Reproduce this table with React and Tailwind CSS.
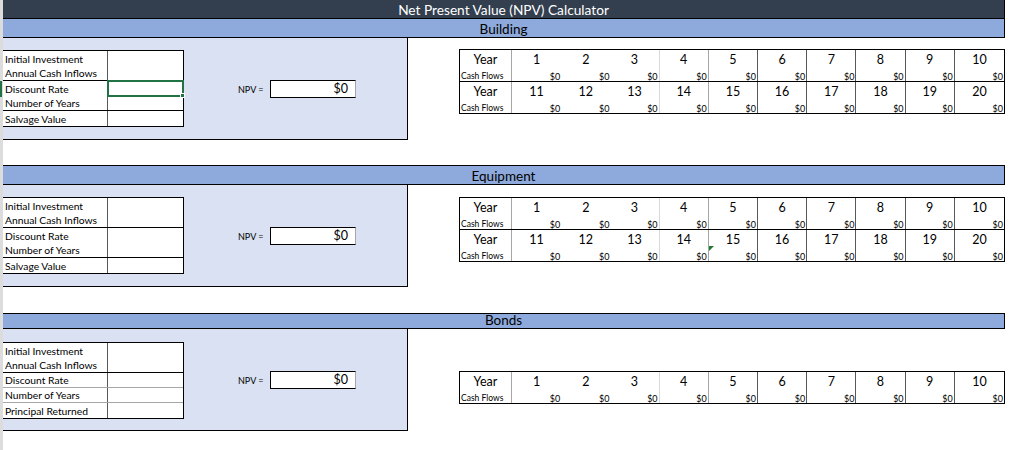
import React from "react";

const colBorders = [
  "",
  "",
  "border-r border-[#d9d9d9]",
  "border-r border-[#a6a6a6]",
  "border-r border-[#595959]",
  "border-r border-[#595959]",
  "border-r border-[#595959]",
  "border-r border-[#595959]",
  "border-r border-[#595959]",
  "",
];

function YearPair({ start, last, triangle }) {
  const nums = Array.from({ length: 10 }, (_, i) => start + i);
  return (
    <div className={"grid grid-cols-[52px_repeat(10,minmax(0,1fr))] " + (last ? "" : "border-b border-black")}>
      <div className="h-[16px] border-r border-[#a6a6a6] flex items-end justify-center text-[12.5px] leading-none">Year</div>
      {nums.map((n, i) => (
        <div key={"y" + n} className={"h-[16px] flex items-end justify-center text-[12.5px] leading-none " + colBorders[i]}>
          {n}
        </div>
      ))}
      <div className="h-[15px] border-r border-[#a6a6a6] flex items-end pl-[1px] pb-[1px] text-[8.5px] leading-none">Cash Flows</div>
      {nums.map((n, i) => (
        <div key={"c" + n} className={"relative h-[15px] flex items-end justify-end pr-[1px] text-[9px] leading-none " + colBorders[i]}>
          {triangle && i === 4 ? (
            <span className="absolute left-0 top-0 w-0 h-0 border-t-[5px] border-t-[#1e7b34] border-r-[5px] border-r-transparent"></span>
          ) : null}
          $0
        </div>
      ))}
    </div>
  );
}

function YearTable({ pairs, triangle }) {
  return (
    <div className="w-[546px] border border-black bg-white">
      {pairs.map((s, idx) => (
        <YearPair key={s} start={s} last={idx === pairs.length - 1} triangle={triangle && idx === 1} />
      ))}
    </div>
  );
}

function LeftTable({ rows, selected }) {
  return (
    <div className="w-[181px] border-t border-b border-r border-black bg-white">
      {rows.map((r, i) => (
        <div
          key={r.label}
          className={
            "flex h-[15px] " +
            (r.line === "black" ? "border-b border-black" : r.line === "gray" ? "border-b border-[#a6a6a6]" : "")
          }
        >
          <div className="w-[105px] border-r border-[#595959] flex items-end pb-[2px] pl-[2px] text-[10.3px] leading-none whitespace-nowrap">
            {r.label}
          </div>
          <div className="relative flex-1">
            {selected === i ? (
              <div className="absolute -left-[1px] -top-[1px] -right-[1px] -bottom-[1px] border-2 border-[#217346]">
                <span className="absolute -right-[3px] -bottom-[3px] w-[5px] h-[5px] bg-[#217346] border border-white"></span>
              </div>
            ) : null}
          </div>
        </div>
      ))}
    </div>
  );
}

function Npv() {
  return (
    <div className="flex items-center">
      <span className="w-[32px] text-[9px] leading-none">NPV =</span>
      <div className="w-[86px] h-[18px] bg-white border border-black border-r-[#a6a6a6] flex items-center justify-end pr-[7px] text-[12.5px] leading-none">
        $0
      </div>
    </div>
  );
}

function Panel({ rows, selected, leftPt, npvMt, yearPt, pairs, triangle }) {
  return (
    <div className="flex h-[102px]">
      <div className={"w-[405px] h-full shrink-0 bg-[#d9e1f2] border-r border-b border-black flex items-start " + leftPt}>
        <LeftTable rows={rows} selected={selected} />
        <div className={"ml-[54px] " + npvMt}>
          <Npv />
        </div>
      </div>
      <div className={"flex-1 pl-[51px] " + yearPt}>
        <YearTable pairs={pairs} triangle={triangle} />
      </div>
    </div>
  );
}

const baseRows = [
  { label: "Initial Investment", line: null },
  { label: "Annual Cash Inflows", line: "black" },
  { label: "Discount Rate", line: null },
  { label: "Number of Years", line: "black" },
  { label: "Salvage Value", line: null },
];

const bondRows = [
  { label: "Initial Investment", line: null },
  { label: "Annual Cash Inflows", line: "black" },
  { label: "Discount Rate", line: "gray" },
  { label: "Number of Years", line: "gray" },
  { label: "Principal Returned", line: null },
];

export default function App() {
  return (
    <div className="w-[1024px] h-[450px] bg-white flex overflow-hidden font-['Lato',sans-serif] text-black">
      <div className="w-[3px] shrink-0 bg-[#dcdcdc] relative">
        <span className="absolute left-0 top-[81px] w-[2px] h-[16px] bg-[#217346]"></span>
      </div>
      <div className="w-[1002px] shrink-0 flex flex-col">
        <div className="h-[19px] pt-[2px] bg-[#333f4f] border-b border-r border-black flex items-center justify-center text-white text-[13.7px] leading-none">
          Net Present Value (NPV) Calculator
        </div>
        <div className="h-[19px] pt-[3px] bg-[#8ea9db] border-b border-r border-black flex items-center justify-center text-[13.5px] leading-none">
          Building
        </div>
        <Panel rows={baseRows} selected={2} leftPt="pt-[12px]" npvMt="mt-[30px]" yearPt="pt-[11px]" pairs={[1, 11]} />
        <div className="h-[25px]"></div>
        <div className="h-[20px] pt-[3px] bg-[#8ea9db] border-t border-b border-r border-black flex items-center justify-center text-[13.5px] leading-none">
          Equipment
        </div>
        <Panel rows={baseRows} npvMt="mt-[30px]" leftPt="pt-[12px]" yearPt="pt-[12px]" pairs={[1, 11]} triangle />
        <div className="h-[26px]"></div>
        <div className="h-[16px] bg-[#8ea9db] border-t border-b border-r border-black flex items-center justify-center text-[13.5px] leading-none">
          Bonds
        </div>
        <Panel rows={bondRows} npvMt="mt-[29px]" leftPt="pt-[13px]" yearPt="pt-[42px]" pairs={[1]} />
      </div>
    </div>
  );
}
